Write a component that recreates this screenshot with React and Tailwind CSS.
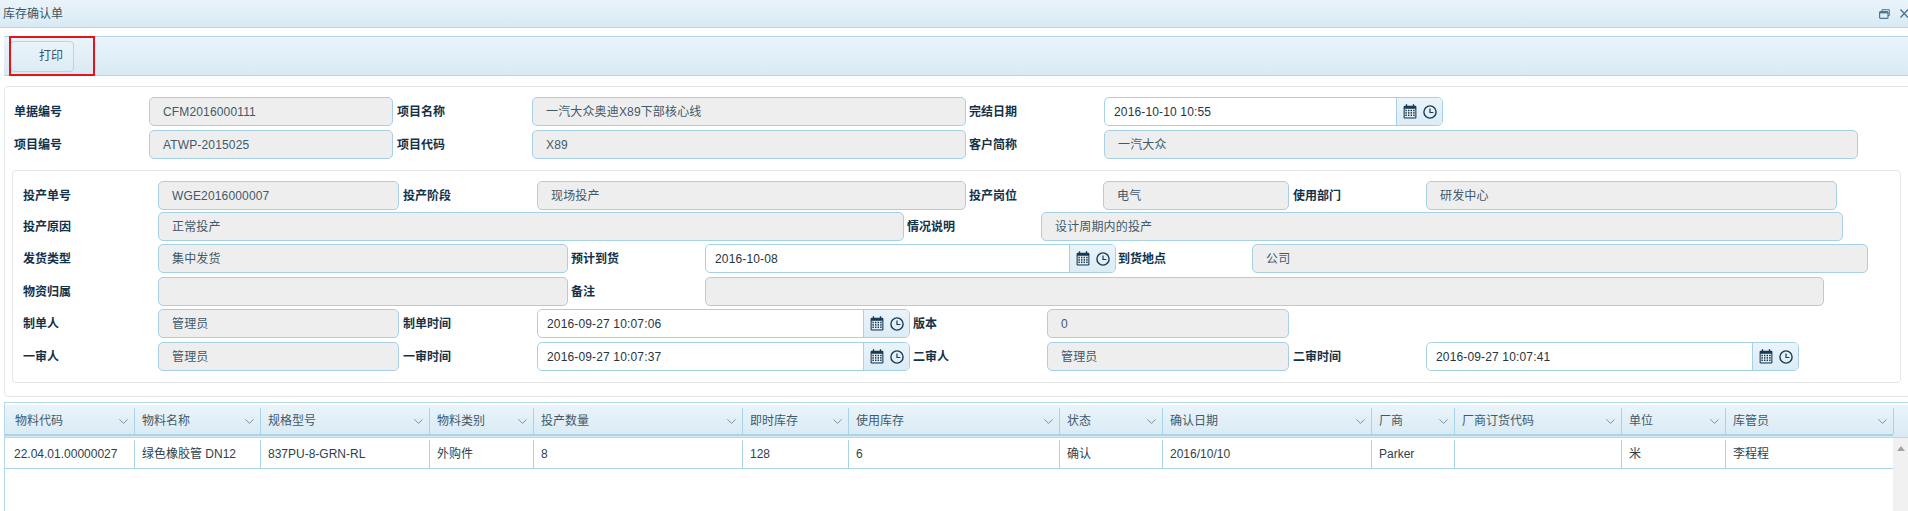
import React from "react";
import { ChevronDown } from "lucide-react";

const font = "font-['Liberation_Sans','Noto_Sans_CJK_SC',sans-serif]";
const gridCols =
	"grid-cols-[130px_126px_169px_104px_209px_106px_211px_103px_209px_83px_167px_104px_168px]";

const columns = [
	"物料代码",
	"物料名称",
	"规格型号",
	"物料类别",
	"投产数量",
	"即时库存",
	"使用库存",
	"状态",
	"确认日期",
	"厂商",
	"厂商订货代码",
	"单位",
	"库管员",
];

const row = [
	"22.04.01.00000027",
	"绿色橡胶管 DN12",
	"837PU-8-GRN-RL",
	"外购件",
	"8",
	"128",
	"6",
	"确认",
	"2016/10/10",
	"Parker",
	"",
	"米",
	"李程程",
];

function CalendarIcon() {
	return (
		<svg width="14" height="15" viewBox="0 0 14 15" fill="none">
			<path d="M3.5 0.3v3M10.5 0.3v3" stroke="#173b54" strokeWidth="1.4" />
			<rect x="0.6" y="1.8" width="12.8" height="12.6" rx="1.2" fill="#173b54" />
			<rect x="1.7" y="4.8" width="10.6" height="8.6" fill="#f2f8fc" />
			{[2.35, 4.95, 7.55, 10.15].map((x) =>
				[5.7, 8.1, 10.5].map((y) => (
					<rect key={`${x}-${y}`} x={x} y={y} width="1.5" height="1.6" fill="#173b54" />
				))
			)}
		</svg>
	);
}

function ClockIcon() {
	return (
		<svg width="14" height="14" viewBox="0 0 14 14" fill="none" stroke="#173b54">
			<circle cx="7" cy="7" r="6.1" strokeWidth="1.4" />
			<path d="M7 3.4V7.5H10.4" strokeWidth="1.2" />
		</svg>
	);
}

function Label({ className = "", children }) {
	return (
		<div className={`shrink-0 font-bold text-[#12324a] ${className}`}>{children}</div>
	);
}

function Field({ className = "", children }) {
	return (
		<div
			className={`flex h-[29px] shrink-0 items-center rounded-[5px] border border-[#a6d0e6] bg-[#eeeeee] pl-[13px] tracking-[0.15px] text-[#42596a] ${className}`}
		>
			{children}
		</div>
	);
}

function DateField({ className = "", children }) {
	return (
		<div
			className={`flex h-[29px] shrink-0 items-stretch overflow-hidden rounded-[5px] border border-[#a6d0e6] bg-white ${className}`}
		>
			<div className="flex flex-1 items-center pl-[9px] tracking-[0.15px] text-[#26343f]">
				{children}
			</div>
			<div className="flex w-[46px] items-center justify-center gap-[6px] border-l border-[#a6d0e6] bg-gradient-to-b from-[#eaf4fa] to-[#dcecf5]">
				<CalendarIcon />
				<ClockIcon />
			</div>
		</div>
	);
}

export default function App() {
	return (
		<div className={`h-[511px] w-[1908px] overflow-hidden bg-white text-[12px] ${font}`}>
			{/* Title bar */}
			<div className="flex h-[28px] items-center justify-between overflow-hidden border-b border-[#b4d6e6] bg-gradient-to-b from-[#eaf4fa] to-[#d9eaf4] pl-[3px]">
				<span className="text-[#3c5566]">库存确认单</span>
				<div className="flex items-center gap-[10px]">
					<svg width="11" height="10" viewBox="0 0 11 10" fill="none" stroke="#4a7690">
						<path d="M3 2V0.7H10.3V6.5H9" strokeWidth="1" />
						<rect x="0.6" y="2.6" width="8.4" height="6.8" rx="1" strokeWidth="1.2" />
						<path d="M0.6 3.6H9" strokeWidth="1.6" />
					</svg>
					<svg width="8" height="9" viewBox="0 0 8 9" fill="none" stroke="#4a7690" strokeWidth="1.4">
						<path d="M0.5 0.5L8 8.5M8 0.5L0.5 8.5" />
					</svg>
				</div>
			</div>

			{/* Toolbar */}
			<div className="relative ml-[4px] mt-[8px] flex h-[40px] items-center border-y border-[#b4d6e6] bg-gradient-to-b from-[#eaf4fa] to-[#d9eaf4] pl-[6px]">
				<div className="flex h-[31px] w-[64px] items-center justify-end rounded-[4px] border border-[#b4d6e6] bg-gradient-to-b from-[#eaf4fa] to-[#dcecf5] pr-[10px] text-[#3c5566]">
					打印
				</div>
				<div className="absolute left-[5px] top-[-1px] h-[40px] w-[86px] border-2 border-[#e5141b]" />
			</div>

			{/* Form */}
			<div className="ml-[4px] mr-[-4px] mt-[10px] h-[311px] rounded-[4px] border border-[#e6e6e6] pt-[10px]">
				<div className="flex flex-col gap-[4px] pl-[9px]">
					<div className="flex items-center">
						<Label className="w-[135px]">单据编号</Label>
						<Field className="w-[244px]">CFM2016000111</Field>
						<Label className="ml-[4px] w-[135px]">项目名称</Label>
						<Field className="w-[434px]">一汽大众奥迪X89下部核心线</Field>
						<Label className="ml-[3px] w-[135px]">完结日期</Label>
						<DateField className="w-[339px]">2016-10-10 10:55</DateField>
					</div>
					<div className="flex items-center">
						<Label className="w-[135px]">项目编号</Label>
						<Field className="w-[244px]">ATWP-2015025</Field>
						<Label className="ml-[4px] w-[135px]">项目代码</Label>
						<Field className="w-[434px]">X89</Field>
						<Label className="ml-[3px] w-[135px]">客户简称</Label>
						<Field className="w-[754px]">一汽大众</Field>
					</div>
				</div>

				{/* Inner group */}
				<div className="ml-[7px] mr-[10px] mt-[11px] h-[213px] rounded-[4px] border border-[#e6e6e6] pl-[10px] pt-[10px]">
					<div className="flex items-center">
						<Label className="w-[135px]">投产单号</Label>
						<Field className="w-[241px]">WGE2016000007</Field>
						<Label className="ml-[4px] w-[134px]">投产阶段</Label>
						<Field className="w-[429px]">现场投产</Field>
						<Label className="ml-[3px] w-[134px]">投产岗位</Label>
						<Field className="w-[186px]">电气</Field>
						<Label className="ml-[4px] w-[133px]">使用部门</Label>
						<Field className="w-[411px]">研发中心</Field>
					</div>
					<div className="mt-[2px] flex items-center">
						<Label className="w-[135px]">投产原因</Label>
						<Field className="w-[746px]">正常投产</Field>
						<Label className="ml-[3px] w-[134px]">情况说明</Label>
						<Field className="w-[802px]">设计周期内的投产</Field>
					</div>
					<div className="mt-[3px] flex items-center">
						<Label className="w-[135px]">发货类型</Label>
						<Field className="w-[410px]">集中发货</Field>
						<Label className="ml-[3px] w-[134px]">预计到货</Label>
						<DateField className="w-[411px]">2016-10-08</DateField>
						<Label className="ml-[2px] w-[134px]">到货地点</Label>
						<Field className="w-[616px]">公司</Field>
					</div>
					<div className="mt-[4px] flex items-center">
						<Label className="w-[135px]">物资归属</Label>
						<Field className="w-[410px]" />
						<Label className="ml-[3px] w-[134px]">备注</Label>
						<Field className="w-[1119px]" />
					</div>
					<div className="mt-[3px] flex items-center">
						<Label className="w-[135px]">制单人</Label>
						<Field className="w-[241px]">管理员</Field>
						<Label className="ml-[4px] w-[134px]">制单时间</Label>
						<DateField className="w-[373px]">2016-09-27 10:07:06</DateField>
						<Label className="ml-[3px] w-[134px]">版本</Label>
						<Field className="w-[242px]">0</Field>
					</div>
					<div className="mt-[4px] flex items-center">
						<Label className="w-[135px]">一审人</Label>
						<Field className="w-[241px]">管理员</Field>
						<Label className="ml-[4px] w-[134px]">一审时间</Label>
						<DateField className="w-[373px]">2016-09-27 10:07:37</DateField>
						<Label className="ml-[3px] w-[134px]">二审人</Label>
						<Field className="w-[242px]">管理员</Field>
						<Label className="ml-[4px] w-[133px]">二审时间</Label>
						<DateField className="w-[373px]">2016-09-27 10:07:41</DateField>
					</div>
				</div>
			</div>

			{/* Grid */}
			<div className="ml-[4px] mt-[5px] h-[109px] border-l border-t border-[#b4d9ea] pt-[2px]">
				<div className="h-[33px] border-b border-[#b4d9ea] bg-gradient-to-b from-[#eaf4fa] to-[#d9eaf4] pt-[3px]">
					<div className="h-[28px] w-[1888px] border-b-2 border-[#a9d3e8]">
						<div className={`grid h-[26px] w-[1889px] ${gridCols}`}>
							{columns.map((name) => (
								<div
									key={name}
									className="flex items-center justify-between border-r border-[#a9d3e8] pl-[7px] pr-[3px] text-[#42596a] first:pl-[10px]"
								>
									<span>{name}</span>
									<ChevronDown size={15} strokeWidth={1.3} className="text-[#5f7d90]" />
								</div>
							))}
						</div>
					</div>
				</div>
				<div className="flex">
					<div className="w-[1888px] overflow-hidden pt-[2px]">
						<div className={`grid h-[28px] w-[1889px] ${gridCols}`}>
							{row.map((value, i) => (
								<div
									key={i}
									className="flex items-center border-r border-[#a9d3e8] pl-[7px] text-[#2e3f4c] first:pl-[9px]"
								>
									{value}
								</div>
							))}
						</div>
						<div className="h-px bg-[#a9d3e8]" />
					</div>
					<div className="flex h-[80px] w-[15px] justify-center bg-[#f1f1f1] pt-[8px]">
						<div className="h-0 w-0 border-x-[4px] border-b-[5px] border-x-transparent border-b-[#a3a3a3]" />
					</div>
				</div>
			</div>
		</div>
	);
}
